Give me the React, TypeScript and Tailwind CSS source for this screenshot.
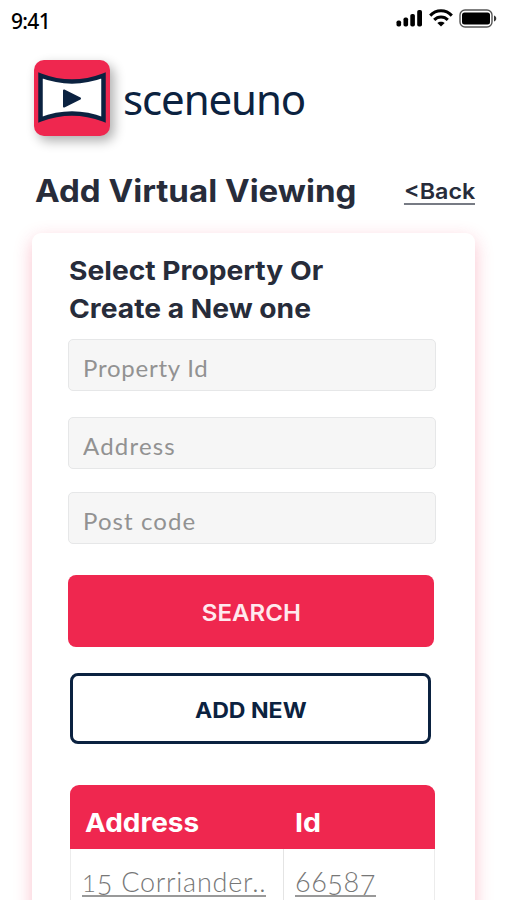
import clsx from 'clsx';

const fields = [
  { name: 'propertyId', placeholder: 'Property Id', className: 'mt-[11px] placeholder:tracking-[0.75px]' },
  { name: 'address', placeholder: 'Address', className: 'mt-[26px] placeholder:tracking-[1.2px]' },
  { name: 'postCode', placeholder: 'Post code', className: 'mt-[23px] placeholder:tracking-[1.1px]' },
];

const StatusBar = () => (
  <div className="flex h-10 items-start justify-between pl-[11px] pr-[10px] pt-[9px]">
    <span className="font-['Noto_Sans'] text-[21px] font-medium leading-6 tracking-[-0.7px] text-black">9:41</span>
    <div className="flex items-start">
      {/* Signal */}
      <svg width="27" height="18" viewBox="0 0 27 18" className="text-black" fill="currentColor">
        <rect x="0.5" y="11.5" width="4.6" height="6" rx="1.8" />
        <rect x="7.5" y="8.5" width="4.6" height="9" rx="1.8" />
        <rect x="14.3" y="5" width="4.6" height="12.5" rx="1.8" />
        <rect x="21.2" y="1" width="4.8" height="16.5" rx="1.8" />
      </svg>
      {/* Wifi */}
      <svg width="24" height="18" viewBox="0 0 24 18" className="ml-[6px]" fill="none" stroke="black" strokeWidth="3">
        <path d="M1.2 6.6C7.2 .2 16.8 .2 22.8 6.6" />
        <path d="M5.2 10.9C9 7 15 7 18.8 10.9" />
        <path d="M8.3 14.1C10.3 12.2 13.7 12.2 15.7 14.1L12 17.6Z" fill="black" stroke="none" />
      </svg>
      {/* Battery */}
      <svg width="38" height="19" viewBox="0 0 38 19" className="ml-[6px]">
        <rect x="1" y="1" width="32" height="17" rx="5" fill="none" stroke="#555" strokeWidth="1.4" />
        <rect x="3" y="3.5" width="28" height="12" rx="2.5" fill="black" />
        <path d="M35 6.5C38 7.5 38 11.5 35 12.5Z" fill="#333" />
      </svg>
    </div>
  </div>
);

const Logo = () => (
  <div className="ml-[34px] mt-5 flex h-[76px] items-start">
    <div className="h-[76px] w-[76px] rounded-[10px] bg-[#ef274f] shadow-[4px_5px_12px_rgba(0,0,0,0.32)]">
      <svg width="76" height="76" viewBox="0 0 76 76">
        <path
          d="M6.5 15.5Q38 27.5 69.5 15.5V59.5Q38 47.5 6.5 59.5Z"
          fill="white"
          stroke="#0b2240"
          strokeWidth="4.5"
        />
        <path d="M30 30.5L46 38.5L30 46.5Z" fill="#0b2240" stroke="#0b2240" strokeWidth="2" strokeLinejoin="round" />
      </svg>
    </div>
    <span className="ml-[13px] mt-[14px] font-['Noto_Sans'] text-[42px] leading-[50px] tracking-[-1.1px] text-[#0b2240]">
      sceneuno
    </span>
  </div>
);

const PropertyTable = () => (
  <div className="ml-[2px] mt-[41px] w-[365px] font-['Lato'] text-[#777777]">
    <div className="flex h-[64px] items-center rounded-t-[9px] bg-[#ef274f] pt-3 font-['Inter'] text-[26px] font-bold leading-8 text-white">
      <div className="w-[211px] pl-[15px]">
        <span className="inline-block origin-left scale-x-[1.075]">Address</span>
      </div>
      <div className="pl-[14px]">
        <span className="inline-block origin-left scale-x-[1.1]">Id</span>
      </div>
    </div>
    <div className="flex h-[51px] border-x border-[#ececec] text-[27px] font-light leading-[22px]">
      <div className="w-[213px] border-r border-[#e4e4e4] pl-[11px] pt-[21px]">
        <a className="inline-flex h-[26px] border-b-2 border-[#999] whitespace-pre tracking-[0.75px]">
          <span className="inline-block translate-y-px text-[24px]">1</span>
          <span className="inline-block translate-y-[3px]">5</span>
          <span> Corriander..</span>
        </a>
      </div>
      <div className="pl-[11px] pt-[22px]">
        <a className="inline-flex h-[26px] border-b-2 border-[#999] tracking-[0.5px]">
          <span>66</span>
          <span className="inline-block translate-y-[3px]">5</span>
          <span>8</span>
          <span className="inline-block translate-y-[3px]">7</span>
        </a>
      </div>
    </div>
  </div>
);

export default function App() {
  return (
    <div className="h-[900px] w-[507px] overflow-hidden bg-white font-['Inter',sans-serif] text-[#272c3a]">
      <StatusBar />
      <Logo />

      <div className="mt-[35px] flex h-10 items-center justify-between pl-[35px] pr-8">
        <h1 className="origin-left scale-x-[1.067] whitespace-nowrap text-[31px] font-bold leading-10">
          Add Virtual Viewing
        </h1>
        <a className="mt-px origin-right scale-x-[1.06] border-b-2 border-[#777b84] text-[22px] font-semibold leading-[24px]">
          &lt;Back
        </a>
      </div>

      <main className="ml-8 mt-[22px] h-[720px] w-[443px] rounded-[9px] bg-white pl-9 pt-[19px] shadow-[0_6px_18px_rgba(239,39,79,0.28)]">
        <h2 className="ml-px origin-left scale-x-[1.085] text-[26px] font-bold leading-[38px]">
          Select Property Or
          <br />
          Create a New one
        </h2>

        {fields.map((field) => (
          <input
            key={field.name}
            name={field.name}
            placeholder={field.placeholder}
            className={clsx(
              "block h-[52px] w-[368px] rounded-[5px] border border-[#e6e7e8] bg-[#f6f6f6] px-[14px] pt-1 font-['Lato'] text-[24px] placeholder:text-[#929292]",
              field.className,
            )}
          />
        ))}

        <button className="mt-[31px] block h-[72px] w-[366px] rounded-[8px] bg-[#ef274f] pt-1 text-[23px] font-semibold text-[#ffe9ee]">
          <span className="inline-block scale-x-[1.045]">SEARCH</span>
        </button>
        <button className="ml-[2px] mt-[26px] block h-[71px] w-[361px] rounded-[8px] border-[3px] border-[#0b2240] pt-[5px] text-[21px] font-bold text-[#0b2240]">
          <span className="inline-block scale-x-[1.1]">ADD NEW</span>
        </button>

        <PropertyTable />
      </main>
    </div>
  );
}
